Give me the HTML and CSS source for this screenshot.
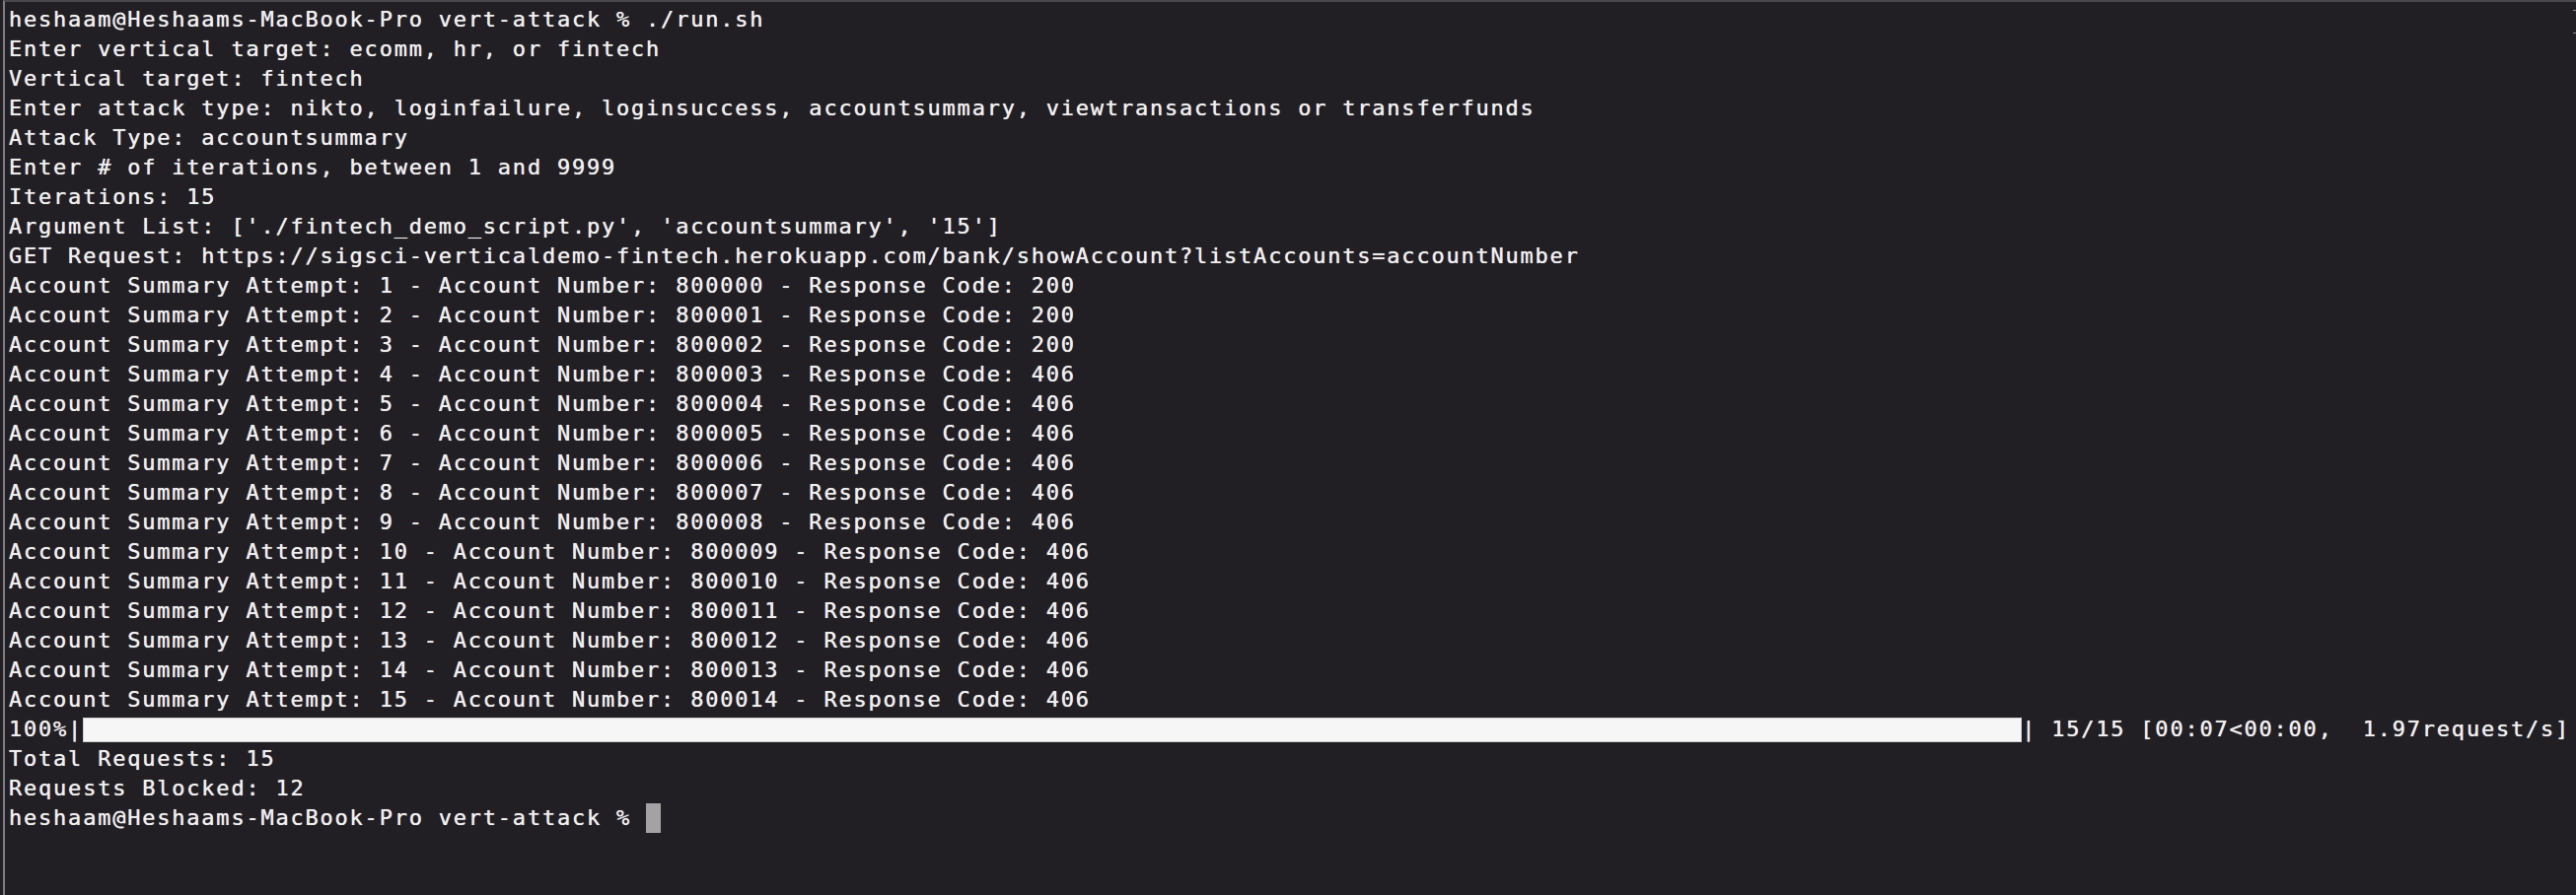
FILE: index.html
```html
<!DOCTYPE html>
<html>
<head>
<meta charset="utf-8">
<link rel="stylesheet" href="styles.css">
</head>
<body>
<div class="term">
  <div class="scrollmark"></div>
  <div class="line">heshaam@Heshaams-MacBook-Pro vert-attack % ./run.sh</div>
  <div class="line">Enter vertical target: ecomm, hr, or fintech</div>
  <div class="line">Vertical target: fintech</div>
  <div class="line">Enter attack type: nikto, loginfailure, loginsuccess, accountsummary, viewtransactions or transferfunds</div>
  <div class="line">Attack Type: accountsummary</div>
  <div class="line">Enter # of iterations, between 1 and 9999</div>
  <div class="line">Iterations: 15</div>
  <div class="line">Argument List: ['./fintech_demo_script.py', 'accountsummary', '15']</div>
  <div class="line">GET Request: https://sigsci-verticaldemo-fintech.herokuapp.com/bank/showAccount?listAccounts=accountNumber</div>
  <div class="line">Account Summary Attempt: 1 - Account Number: 800000 - Response Code: 200</div>
  <div class="line">Account Summary Attempt: 2 - Account Number: 800001 - Response Code: 200</div>
  <div class="line">Account Summary Attempt: 3 - Account Number: 800002 - Response Code: 200</div>
  <div class="line">Account Summary Attempt: 4 - Account Number: 800003 - Response Code: 406</div>
  <div class="line">Account Summary Attempt: 5 - Account Number: 800004 - Response Code: 406</div>
  <div class="line">Account Summary Attempt: 6 - Account Number: 800005 - Response Code: 406</div>
  <div class="line">Account Summary Attempt: 7 - Account Number: 800006 - Response Code: 406</div>
  <div class="line">Account Summary Attempt: 8 - Account Number: 800007 - Response Code: 406</div>
  <div class="line">Account Summary Attempt: 9 - Account Number: 800008 - Response Code: 406</div>
  <div class="line">Account Summary Attempt: 10 - Account Number: 800009 - Response Code: 406</div>
  <div class="line">Account Summary Attempt: 11 - Account Number: 800010 - Response Code: 406</div>
  <div class="line">Account Summary Attempt: 12 - Account Number: 800011 - Response Code: 406</div>
  <div class="line">Account Summary Attempt: 13 - Account Number: 800012 - Response Code: 406</div>
  <div class="line">Account Summary Attempt: 14 - Account Number: 800013 - Response Code: 406</div>
  <div class="line">Account Summary Attempt: 15 - Account Number: 800014 - Response Code: 406</div>
  <div class="line progress"><span>100%|</span><span class="bar"></span><span>| 15/15 [00:07&lt;00:00,  1.97request/s]</span></div>
  <div class="line">Total Requests: 15</div>
  <div class="line">Requests Blocked: 12</div>
  <div class="line">heshaam@Heshaams-MacBook-Pro vert-attack % <span class="cursor"></span></div>
</div>
</body>
</html>
```
FILE: styles.css
```css
html, body {
  margin: 0;
  padding: 0;
  background: #211f23;
}
.term {
  position: relative;
  box-sizing: border-box;
  width: 2612px;
  height: 908px;
  background: #211f23;
  border-top: 2px solid #4a484c;
  border-left: 2px solid #807e82;
  margin-left: 3px;
  padding: 3px 0 0 4px;
  font-family: "DejaVu Sans Mono", monospace;
  font-size: 22px;
  letter-spacing: 1.78px;
  color: #efefef;
  text-shadow: 0 0 0.7px #efefef;
}
.line {
  height: 30px;
  line-height: 30px;
  white-space: pre;
}
.progress {
  display: flex;
  align-items: center;
}
.bar {
  display: inline-block;
  width: 1966px;
  height: 25px;
  background: #f6f6f6;
  box-shadow: inset 0 0 0 1px #cfcfcf;
}
.cursor {
  display: inline-block;
  width: 15px;
  height: 30px;
  vertical-align: top;
  background: #a3a3a3;
}
.scrollmark {
  position: absolute;
  right: 2px;
  top: 8px;
  width: 3px;
  height: 22px;
  border: 1px solid #8a8a8a;
  border-left: none;
}
```
